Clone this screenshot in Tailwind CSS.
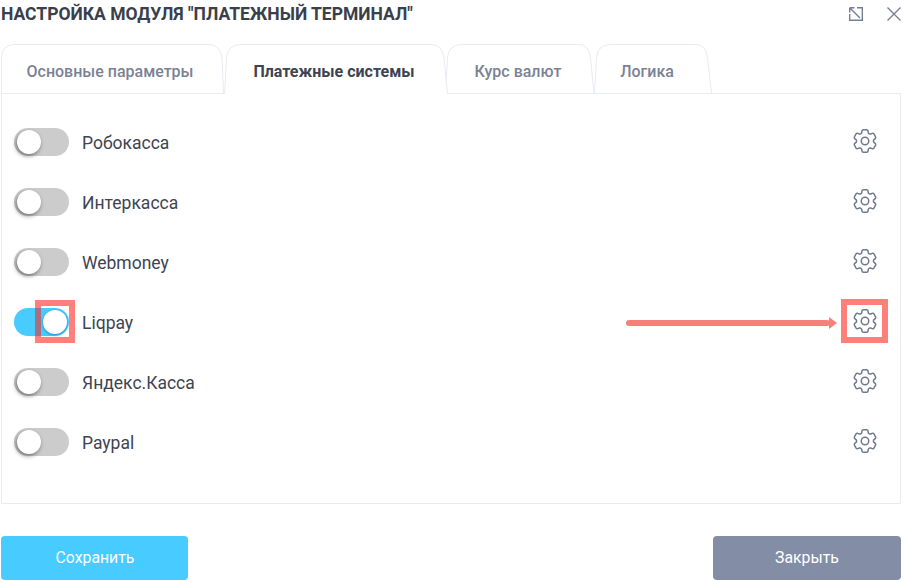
<!DOCTYPE html>
<html lang="ru">
  <head>
    <meta charset="UTF-8" />
    <title>Настройка модуля</title>
    <script src="https://cdn.jsdelivr.net/npm/@tailwindcss/browser@4"></script>
  </head>
  <body class="bg-white w-[904px] h-[580px] overflow-hidden relative font-['Roboto',sans-serif] text-[#3e4451]">
    <svg class="hidden">
      <symbol id="gear" viewBox="0 0 24 24">
        <path d="M9.594 3.94c.09-.542.56-.94 1.11-.94h2.593c.55 0 1.02.398 1.11.94l.213 1.281c.063.374.313.686.645.87.074.04.147.083.22.127.325.196.72.257 1.075.124l1.217-.456a1.125 1.125 0 0 1 1.37.49l1.296 2.247a1.125 1.125 0 0 1-.26 1.431l-1.003.827c-.293.241-.438.613-.43.992a7.723 7.723 0 0 1 0 .255c-.008.378.137.75.43.991l1.004.827c.424.35.534.955.26 1.43l-1.298 2.247a1.125 1.125 0 0 1-1.369.491l-1.217-.456c-.355-.133-.75-.072-1.076.124a6.47 6.47 0 0 1-.22.128c-.331.183-.581.495-.644.869l-.213 1.281c-.09.543-.56.94-1.11.94h-2.594c-.55 0-1.019-.398-1.11-.94l-.213-1.281c-.062-.374-.312-.686-.644-.87a6.52 6.52 0 0 1-.22-.127c-.325-.196-.72-.257-1.076-.124l-1.217.456a1.125 1.125 0 0 1-1.369-.49l-1.297-2.247a1.125 1.125 0 0 1 .26-1.431l1.004-.827c.292-.24.437-.613.43-.991a6.932 6.932 0 0 1 0-.255c.007-.38-.138-.751-.43-.992l-1.004-.827a1.125 1.125 0 0 1-.26-1.43l1.297-2.247a1.125 1.125 0 0 1 1.37-.491l1.216.456c.356.133.751.072 1.076-.124.072-.044.146-.086.22-.128.332-.183.582-.495.644-.869l.214-1.28Z" />
        <path d="M15 12a3 3 0 1 1-6 0 3 3 0 0 1 6 0Z" />
      </symbol>
    </svg>

    <header class="h-[44px] pl-px pr-[2px] flex items-start justify-between">
      <h1 class="text-[17.5px] leading-[28px] font-bold uppercase text-[#3a3f4b] whitespace-nowrap">Настройка модуля "Платежный терминал"</h1>
      <div class="flex items-center gap-[22px] pt-[6px] text-[#748096]">
        <svg class="w-[16px] h-[16px]" viewBox="0 0 16 16" fill="none" stroke="currentColor" stroke-width="1.4">
          <path d="M9 1.7H14.3V14.3H1.7V8" />
          <path d="M1.7 1.7L12 12M1.7 1.7V6.5M1.7 1.7H6.5" />
        </svg>
        <svg class="w-[16px] h-[16px]" viewBox="0 0 16 16" fill="none" stroke="currentColor" stroke-width="1.4">
          <path d="M1.5 1.5L14.5 14.5M14.5 1.5L1.5 14.5" />
        </svg>
      </div>
    </header>

    <nav class="h-[49px] pl-px flex items-stretch text-[16px] font-medium text-[#7b8294]">
      <div class="relative w-[223px] flex items-center justify-center pr-[5px] pt-[7px]">
        <svg class="absolute inset-0" width="223" height="50" fill="none" stroke="#e8ebf2"><path d="M0.5 49V14Q0.5 1 13 0.5H208Q219 0.5 221 14L222.5 49" /></svg>
        <span class="relative">Основные параметры</span>
      </div>
      <div class="relative w-[224px] flex items-center justify-center pr-[4px] pt-[7px] font-bold text-[#3e4451] z-10">
        <svg class="absolute inset-0" width="224" height="50" fill="#fff" stroke="#e8ebf2"><path d="M0.5 50L2.5 14Q3.5 1 16 0.5H207Q218 0.5 220 14L223.5 50" /></svg>
        <span class="relative">Платежные системы</span>
      </div>
      <div class="relative w-[150px] -ml-[3px] flex items-center justify-center pr-[4px] pt-[7px]">
        <svg class="absolute inset-0" width="150" height="50" fill="none" stroke="#e8ebf2"><path d="M0.5 49L2.5 14Q3.5 1 16 0.5H134Q144 0.5 145.5 14L149 49" /></svg>
        <span class="relative">Курс валют</span>
      </div>
      <div class="relative w-[118px] -ml-px flex items-center justify-center pr-[12px] pt-[7px]">
        <svg class="absolute inset-0" width="118" height="50" fill="none" stroke="#e8ebf2"><path d="M0.5 49L2.5 14Q3.5 1 16 0.5H102Q112 0.5 113.5 14L117.5 49" /></svg>
        <span class="relative">Логика</span>
      </div>
    </nav>

    <main class="mx-px w-[900px] h-[411px] border border-[#e8ebf2] pt-[18px] pl-[12px] pr-[20px] text-[17.5px] text-[#3e4451]">
      <div class="h-[60px] flex items-center gap-[13px]">
        <span class="w-[55px] h-[28px] rounded-full bg-[#cccccc] flex items-center pl-[3px]"><span class="w-[24px] h-[24px] rounded-full bg-white shadow-[-1px_2px_4px_rgba(0,0,0,0.45)]"></span></span>
        <span class="pt-[2px]">Робокасса</span>
        <svg class="ml-auto -mt-[2px] w-[30px] h-[30px] text-[#6f7a8f]" fill="none" stroke="currentColor" stroke-width="1.2" stroke-linecap="round" stroke-linejoin="round"><use href="#gear" /></svg>
      </div>
      <div class="h-[60px] flex items-center gap-[13px]">
        <span class="w-[55px] h-[28px] rounded-full bg-[#cccccc] flex items-center pl-[3px]"><span class="w-[24px] h-[24px] rounded-full bg-white shadow-[-1px_2px_4px_rgba(0,0,0,0.45)]"></span></span>
        <span class="pt-[2px]">Интеркасса</span>
        <svg class="ml-auto -mt-[2px] w-[30px] h-[30px] text-[#6f7a8f]" fill="none" stroke="currentColor" stroke-width="1.2" stroke-linecap="round" stroke-linejoin="round"><use href="#gear" /></svg>
      </div>
      <div class="h-[60px] flex items-center gap-[13px]">
        <span class="w-[55px] h-[28px] rounded-full bg-[#cccccc] flex items-center pl-[3px]"><span class="w-[24px] h-[24px] rounded-full bg-white shadow-[-1px_2px_4px_rgba(0,0,0,0.45)]"></span></span>
        <span class="pt-[2px]">Webmoney</span>
        <svg class="ml-auto -mt-[2px] w-[30px] h-[30px] text-[#6f7a8f]" fill="none" stroke="currentColor" stroke-width="1.2" stroke-linecap="round" stroke-linejoin="round"><use href="#gear" /></svg>
      </div>
      <div class="h-[60px] flex items-center gap-[13px]">
        <span class="w-[55px] h-[28px] rounded-full bg-[#48cbff] flex items-center justify-end pr-[2px]"><span class="w-[24px] h-[24px] rounded-full bg-white shadow-[0_1px_3px_rgba(0,90,160,0.55)]"></span></span>
        <span class="pt-[2px]">Liqpay</span>
        <svg class="ml-auto -mt-[2px] w-[30px] h-[30px] text-[#6f7a8f]" fill="none" stroke="currentColor" stroke-width="1.2" stroke-linecap="round" stroke-linejoin="round"><use href="#gear" /></svg>
      </div>
      <div class="h-[60px] flex items-center gap-[13px]">
        <span class="w-[55px] h-[28px] rounded-full bg-[#cccccc] flex items-center pl-[3px]"><span class="w-[24px] h-[24px] rounded-full bg-white shadow-[-1px_2px_4px_rgba(0,0,0,0.45)]"></span></span>
        <span class="pt-[2px]">Яндекс.Касса</span>
        <svg class="ml-auto -mt-[2px] w-[30px] h-[30px] text-[#6f7a8f]" fill="none" stroke="currentColor" stroke-width="1.2" stroke-linecap="round" stroke-linejoin="round"><use href="#gear" /></svg>
      </div>
      <div class="h-[60px] flex items-center gap-[13px]">
        <span class="w-[55px] h-[28px] rounded-full bg-[#cccccc] flex items-center pl-[3px]"><span class="w-[24px] h-[24px] rounded-full bg-white shadow-[-1px_2px_4px_rgba(0,0,0,0.45)]"></span></span>
        <span class="pt-[2px]">Paypal</span>
        <svg class="ml-auto -mt-[2px] w-[30px] h-[30px] text-[#6f7a8f]" fill="none" stroke="currentColor" stroke-width="1.2" stroke-linecap="round" stroke-linejoin="round"><use href="#gear" /></svg>
      </div>
    </main>

    <footer class="mt-[32px] px-px w-[902px] flex justify-between text-[15.8px] text-white">
      <button class="w-[187px] h-[44px] rounded-[4px] bg-[#48cbff] pl-[1px]">Сохранить</button>
      <button class="w-[188px] h-[44px] rounded-[4px] bg-[#838da6]">Закрыть</button>
    </footer>

    <!-- annotation marks on top of the screenshot -->
    <div class="absolute left-[35px] top-[300px] w-[40px] h-[43px] border-[6px] border-[#ff7f7a]"></div>
    <div class="absolute left-[35px] top-[308px] w-[6px] h-[28px] bg-[#a8707f]"></div>
    <div class="absolute left-[841px] top-[299px] w-[47px] h-[44px] border-[6px] border-[#ff7f7a]"></div>
    <svg class="absolute left-[624px] top-[313px]" width="216" height="20" fill="#f9807a">
      <rect x="2" y="7" width="204" height="6" rx="3" />
      <path d="M205 4L213 10L205 16Z" />
    </svg>
  </body>
</html>
